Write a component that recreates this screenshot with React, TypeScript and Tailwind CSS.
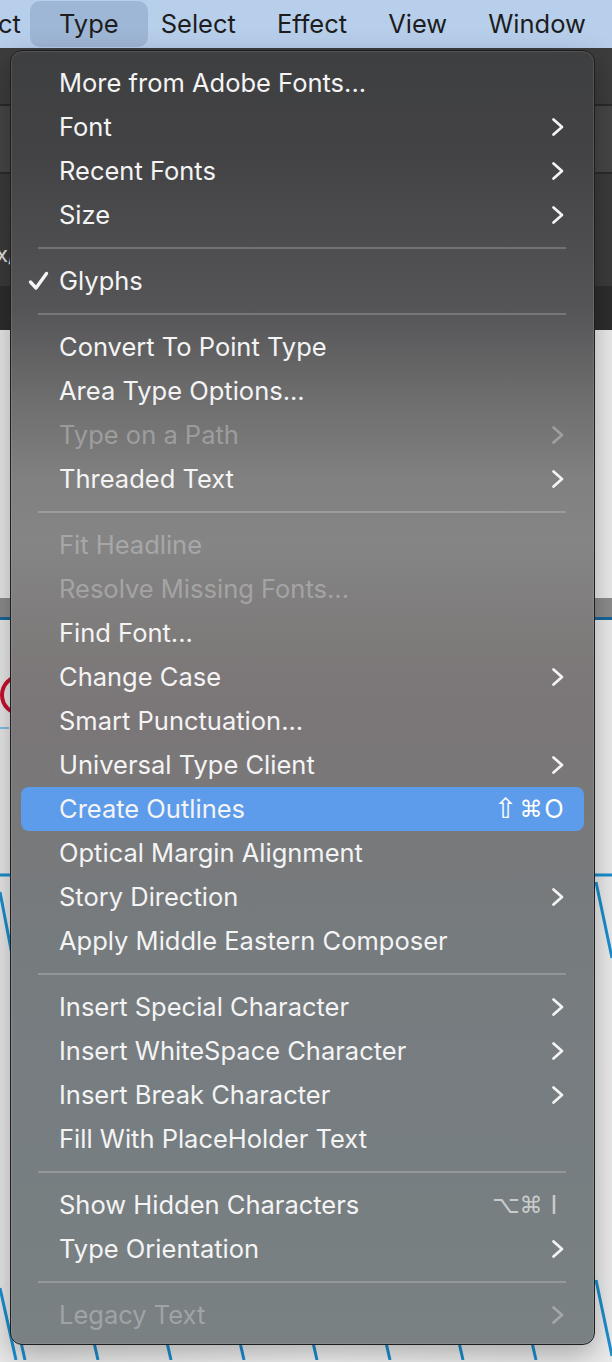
import React from "react";

type Row = {
  label: string;
  sub?: boolean;
  disabled?: boolean;
  checked?: boolean;
  active?: boolean;
  keys?: [string, string, string];
};

type Entry = Row | "sep";

// Type menu contents, top to bottom
const entries: Entry[] = [
  { label: "More from Adobe Fonts..." },
  { label: "Font", sub: true },
  { label: "Recent Fonts", sub: true },
  { label: "Size", sub: true },
  "sep",
  { label: "Glyphs", checked: true },
  "sep",
  { label: "Convert To Point Type" },
  { label: "Area Type Options..." },
  { label: "Type on a Path", sub: true, disabled: true },
  { label: "Threaded Text", sub: true },
  "sep",
  { label: "Fit Headline", disabled: true },
  { label: "Resolve Missing Fonts...", disabled: true },
  { label: "Find Font..." },
  { label: "Change Case", sub: true },
  { label: "Smart Punctuation..." },
  { label: "Universal Type Client", sub: true },
  { label: "Create Outlines", keys: ["⇧", "⌘", "O"], active: true },
  { label: "Optical Margin Alignment" },
  { label: "Story Direction", sub: true },
  { label: "Apply Middle Eastern Composer" },
  "sep",
  { label: "Insert Special Character", sub: true },
  { label: "Insert WhiteSpace Character", sub: true },
  { label: "Insert Break Character", sub: true },
  { label: "Fill With PlaceHolder Text" },
  "sep",
  { label: "Show Hidden Characters", keys: ["⌥", "⌘", "I"] },
  { label: "Type Orientation", sub: true },
  "sep",
  { label: "Legacy Text", sub: true, disabled: true },
];

function Chevron() {
  return (
    <svg width="14" height="20" viewBox="0 0 14 20" fill="none">
      <polyline
        points="2.5,2.5 11,10 2.5,17.5"
        stroke="currentColor"
        strokeWidth="2.7"
        strokeLinecap="round"
        strokeLinejoin="round"
      />
    </svg>
  );
}

function Check() {
  return (
    <svg width="21" height="20" viewBox="0 0 21 20" fill="none">
      <path
        d="M2.5 11 L8 17 L18.5 2.5"
        stroke="currentColor"
        strokeWidth="3.4"
        strokeLinecap="round"
        strokeLinejoin="round"
      />
    </svg>
  );
}

function MenuRow({ row }: { row: Row }) {
  const tone = row.disabled ? "text-white/30" : "text-[#f4f4f4]";
  return (
    <div
      className={`flex h-[44px] items-center rounded-[8px] pr-[19px] ${
        row.active ? "bg-[#5d9cea]" : ""
      } ${tone}`}
    >
      <div className="flex w-[38px] shrink-0 items-center pl-[7px]">
        {row.checked && <Check />}
      </div>
      <span className="flex-1 whitespace-nowrap">{row.label}</span>
      {row.sub && <Chevron />}
      {row.keys && (
        <span
          className={`flex h-[44px] items-center font-['DejaVu_Sans',sans-serif] leading-none ${
            row.active ? "text-white" : "text-white/60"
          }`}
        >
          <span
            className={`w-[27px] text-center ${
              row.keys[0] === "⇧" ? "text-[28px]" : "text-[24px]"
            }`}
          >
            {row.keys[0]}
          </span>
          <span className="w-[24px] text-center text-[23px]">{row.keys[1]}</span>
          <span className="w-[22px] text-center font-['Inter',sans-serif] text-[25.5px]">
            {row.keys[2]}
          </span>
        </span>
      )}
    </div>
  );
}

function MenuBar() {
  return (
    <div className="flex h-[48px] shrink-0 items-start bg-[#b8cfec] text-[25.5px] text-[#1d1d20]">
      <span className="w-[30px] shrink-0 overflow-hidden leading-[47px]">
        <span className="-ml-[2px] block">ct</span>
      </span>
      <span className="mt-[1px] h-[46px] rounded-[10px] bg-[#9fb7d6] px-[29px] leading-[46px]">
        Type
      </span>
      <div className="ml-[13px] flex gap-[41px] leading-[47px]">
        <span>Select</span>
        <span>Effect</span>
        <span>View</span>
        <span>Window</span>
      </div>
    </div>
  );
}

// slivers of the Illustrator window that peek out around the menu
function Workspace() {
  return (
    <div className="flex flex-1 flex-col">
      <div className="flex h-[282px] flex-col bg-[#3c3c3c]">
        <div className="h-[58px] border-b-2 border-[#2a2a2a] bg-[#3d3d3d]" />
        <div className="h-[68px] border-b-2 border-[#2b2b2b] bg-[#464646]" />
        <div className="relative h-[112px] bg-[#3b3b3b]">
          <span className="absolute left-[-4px] top-[64px] font-['Inter',sans-serif] text-[22px] text-[#e6e6e6]">
            x/
          </span>
        </div>
        <div className="flex-1 bg-[#2d2d2d]" />
      </div>
      <div className="h-[268px] bg-[linear-gradient(90deg,#e9e9e9_0%,#f3f3f3_50%,#ececec_100%)]" />
      <div className="h-[22px] border-b-[3px] border-[#17679c] bg-[#8d8d8d]" />
      <div className="relative flex-1 bg-[linear-gradient(90deg,#e9e9e9_0%,#f6f6f6_50%,#ececec_100%)]">
        <svg
          className="absolute inset-0"
          width="612"
          height="740"
          viewBox="0 0 612 740"
          fill="none"
        >
          <circle cx="21" cy="75" r="19" stroke="#c8102e" strokeWidth="4" />
          <line x1="0" y1="108" x2="9" y2="108" stroke="#7fc0e8" strokeWidth="2" />
          <line x1="0" y1="255" x2="612" y2="255" stroke="#1a8fd1" strokeWidth="3" />
          <polyline
            points="0,272 14,345 28,272"
            stroke="#1a8fd1"
            strokeWidth="3"
          />
          <polyline
            points="596,262 612,338"
            stroke="#1a8fd1"
            strokeWidth="3"
          />
          <polyline points="0,668 16,740" stroke="#1a8fd1" strokeWidth="3" />
          <polyline points="596,660 612,736" stroke="#1a8fd1" strokeWidth="3" />
          {[20, 93, 166, 239, 312, 385, 458, 531].map((x) => (
            <line
              key={x}
              x1={x}
              y1="718"
              x2={x + 5}
              y2="740"
              stroke="#1a8fd1"
              strokeWidth="3"
            />
          ))}
        </svg>
      </div>
    </div>
  );
}

export default function App() {
  return (
    <div className="relative flex h-[1362px] w-[612px] flex-col overflow-hidden font-['Inter',sans-serif]">
      <MenuBar />
      <Workspace />

      {/* the open Type menu */}
      <div className="absolute left-[10px] top-[50px] w-[585px] rounded-[12px] border border-[#1e1e1e] bg-[linear-gradient(180deg,#3e3f41_0%,#434345_8%,#555557_20%,#6e6e6f_27%,#808080_33%,#858585_38%,#7e7b7b_45%,#7b7677_51%,#797879_58%,#767b7e_68%,#777e81_85%,#7a8183_100%)] px-[10px] pb-[7px] pt-[10px] text-[25.5px] shadow-[inset_0_0_0_1px_rgba(255,255,255,0.1),0_10px_30px_rgba(0,0,0,0.3)]">
        {entries.map((e, i) =>
          e === "sep" ? (
            <div key={i} className="flex h-[22px] items-center pl-[17px] pr-[18px]">
              <div className="h-[2px] w-full bg-white/20" />
            </div>
          ) : (
            <MenuRow key={i} row={e} />
          )
        )}
      </div>
    </div>
  );
}
